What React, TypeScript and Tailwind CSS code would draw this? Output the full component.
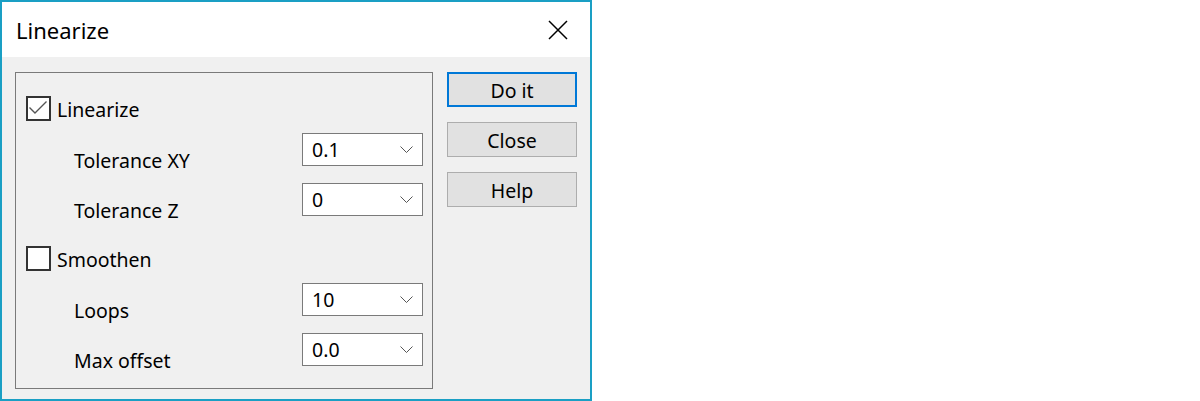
const font = { fontFamily: '"Noto Sans", "Open Sans", Arial, sans-serif' };

const Chevron = () => (
  <svg width="13" height="7" viewBox="0 0 13 7" className="shrink-0">
    <path d="M0.5 0.5 L6.5 6.5 L12.5 0.5" fill="none" stroke="#555" strokeWidth="1" />
  </svg>
);

const Combo = ({ value }: { value: string }) => (
  <div className="w-[121px] h-[33px] border border-[#7a7a7a] bg-white flex items-center justify-between pl-[9px] pr-[9px]">
    <span className="text-[19.5px] leading-none text-black">{value}</span>
    <Chevron />
  </div>
);

const CheckBox = ({ checked, label }: { checked: boolean; label: string }) => (
  <div className="h-[25px] flex items-center pl-[10px]">
    <div className="w-[25px] h-[25px] border-2 border-[#333333] bg-white flex items-center justify-center">
      {checked && (
        <svg width="21" height="21" viewBox="0 0 21 21">
          <path d="M1.5 9.5 L7 15 L18.5 3.5" fill="none" stroke="#555" strokeWidth="1.4" />
        </svg>
      )}
    </div>
    <span className="ml-[6px] pt-[3px] text-[19.5px] leading-none text-black">{label}</span>
  </div>
);

const ComboRow = ({ label, value, className }: { label: string; value: string; className: string }) => (
  <div className={`h-[33px] flex justify-between pr-[9px] ${className}`}>
    <span className="pl-[58px] pt-[18px] text-[19.5px] leading-none text-black">{label}</span>
    <Combo value={value} />
  </div>
);

const Button = ({ label, primary }: { label: string; primary?: boolean }) => (
  <div
    className={
      primary
        ? "w-[130px] h-[35px] border-2 border-[#0078d7] bg-[#e1e1e1] flex items-center justify-center pt-[2px] text-[19.5px] leading-none text-black"
        : "w-[130px] h-[35px] border border-[#adadad] bg-[#e1e1e1] flex items-center justify-center pt-[2px] text-[19.5px] leading-none text-black"
    }
  >
    {label}
  </div>
);

export default function App() {
  return (
    <div className="w-[1200px] h-[401px] bg-white flex" style={font}>
      <div className="w-[592px] h-[401px] border-2 border-[#1a9fc4] flex flex-col">
        <div className="h-[55px] bg-white flex items-center justify-between pl-[14px] pr-[22px]">
          <span className="text-[22px] leading-none text-black">Linearize</span>
          <svg width="20" height="20" viewBox="0 0 20 20">
            <path d="M1 1 L19 19 M19 1 L1 19" stroke="#000" strokeWidth="1.5" />
          </svg>
        </div>
        <div className="flex-1 bg-[#f0f0f0] flex items-start pl-[13px] pt-[15px] gap-[14px]">
          <div className="w-[418px] h-[317px] border border-[#7a7a7a] flex flex-col pt-[23px]">
            <CheckBox checked label="Linearize" />
            <ComboRow label="Tolerance XY" value="0.1" className="mt-[12px]" />
            <ComboRow label="Tolerance Z" value="0" className="mt-[17px]" />
            <div className="mt-[30px]">
              <CheckBox checked={false} label="Smoothen" />
            </div>
            <ComboRow label="Loops" value="10" className="mt-[12px]" />
            <ComboRow label="Max offset" value="0.0" className="mt-[17px]" />
          </div>
          <div className="flex flex-col gap-[15px]">
            <Button label="Do it" primary />
            <Button label="Close" />
            <Button label="Help" />
          </div>
        </div>
      </div>
    </div>
  );
}
